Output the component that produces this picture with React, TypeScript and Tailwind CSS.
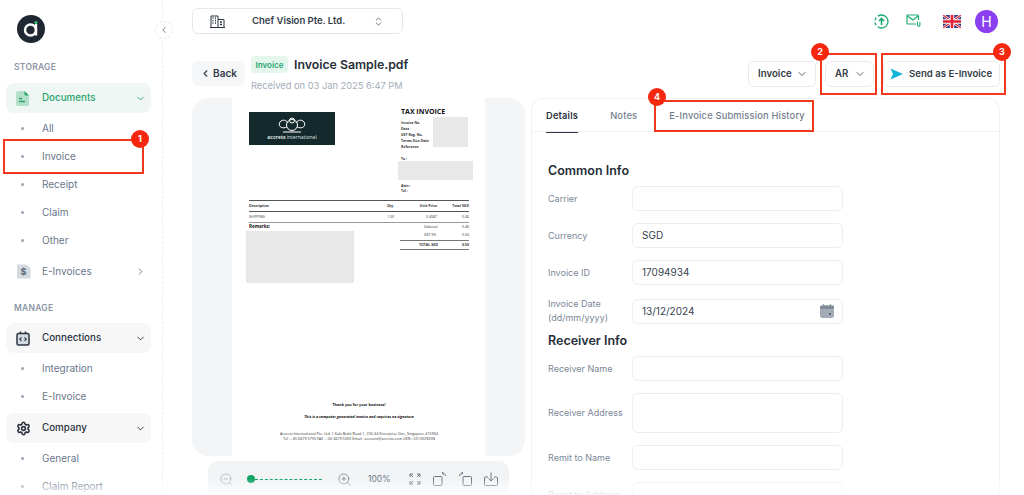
import { ChevronDown, ChevronLeft, ChevronRight, ChevronsUpDown, Settings, ZoomIn, ZoomOut } from "lucide-react";

function SubItem({ label }: { label: string }) {
  return (
    <div className="flex h-[28px] items-center pl-[21px] text-[10px] text-[#69778a]">
      <span className="mr-[18px] h-[3px] w-[3px] rounded-full bg-[#9aa5b3]" />
      {label}
    </div>
  );
}

function GroupRow({ icon, label, active, open = true }: { icon: React.ReactNode; label: string; active?: boolean; open?: boolean }) {
  return (
    <div className={`mx-[6px] flex h-[30px] w-[145px] items-center rounded-[8px] pl-[10px] pr-[5px] text-[9.8px] font-medium ${active ? "bg-[#eff6f3] text-[#2ba56f]" : "bg-[#f7f7f8] text-[#2b3440]"}`}>
      <span className="flex w-[26px] shrink-0 items-center">{icon}</span>
      <span className="flex-1">{label}</span>
      {open && <ChevronDown size={11} strokeWidth={2} />}
    </div>
  );
}

function Sidebar() {
  return (
    <aside className="w-[163px] shrink-0 border-r border-dashed border-[#eceef0]">
      <div className="pl-[17px] pt-[15px]">
        <svg width="28" height="28" viewBox="0 0 28 28">
          <circle cx="14" cy="14" r="14" fill="#1f2733" />
          <circle cx="13.5" cy="15" r="5.5" fill="none" stroke="#fff" strokeWidth="2.4" />
          <path d="M19 9v11.5" stroke="#fff" strokeWidth="2.4" />
          <circle cx="19" cy="7.5" r="1.6" fill="#34c17b" />
        </svg>
      </div>
      <div className="mt-[18px] h-[12px] pl-[14px] text-[8.5px] font-semibold leading-[12px] tracking-[0.03em] text-[#8b96a5]">STORAGE</div>
      <div className="mt-[10px]">
        <GroupRow
          active
          label="Documents"
          icon={
            <svg width="13" height="15" viewBox="0 0 13 15">
              <path d="M2 0h6.5L13 4.5V13a2 2 0 0 1-2 2H2a2 2 0 0 1-2-2V2a2 2 0 0 1 2-2z" fill="#b4e0ca" />
              <path d="M8.5 0L13 4.5H9.500a1 1 0 0 1-1-1z" fill="#2ba56f" />
              <path d="M3 7.5h3M3 10.5h6" stroke="#2ba56f" strokeWidth="1.3" />
            </svg>
          }
        />
      </div>
      <div className="mt-[1px]">
        {["All", "Invoice", "Receipt", "Claim", "Other"].map((s) => (
          <SubItem key={s} label={s} />
        ))}
      </div>
      <div className="mx-[6px] mt-[2px] flex h-[30px] w-[145px] items-center pl-[10px] pr-[5px] text-[10px] text-[#69778a]">
        <span className="flex w-[26px] shrink-0 items-center">
          <svg width="15" height="15" viewBox="0 0 15 15">
            <path d="M1 0.5h9.5L14.500 4v10.500H1z" fill="#d5dae0" />
            <text x="7.5" y="11" fontSize="9" fontWeight="700" textAnchor="middle" fill="#5b6878" fontFamily="Inter">$</text>
          </svg>
        </span>
        <span className="flex-1">E-Invoices</span>
        <ChevronRight size={11} strokeWidth={2} />
      </div>
      <div className="mt-[16px] h-[12px] pl-[14px] text-[8.5px] font-semibold leading-[12px] tracking-[0.03em] text-[#8b96a5]">MANAGE</div>
      <div className="mt-[9px]">
        <GroupRow
          label="Connections"
          icon={
            <svg width="14" height="15" viewBox="0 0 14 15" fill="none">
              <rect x="1" y="2.5" width="12" height="11.5" rx="1.5" fill="#d5dae0" stroke="#2b3440" strokeWidth="1.5" />
              <path d="M4.500 0.500v2M9.500 0.500v2" stroke="#2b3440" strokeWidth="1.5" />
              <path d="M5.500 6.500L3.800 8.200l1.700 1.700M8.500 6.500l1.700 1.700-1.700 1.700" stroke="#2b3440" strokeWidth="1.1" />
            </svg>
          }
        />
      </div>
      <div className="mt-[1px]">
        <SubItem label="Integration" />
        <SubItem label="E-Invoice" />
      </div>
      <div className="mt-[3px]">
        <GroupRow label="Company" icon={<Settings size={15} strokeWidth={2.6} className="text-[#2b3440]" />} />
      </div>
      <div className="mt-[1px]">
        <SubItem label="General" />
        <SubItem label="Claim Report" />
      </div>
    </aside>
  );
}

function TopBar() {
  return (
    <div className="flex h-[50px] items-start justify-between pr-[26px] pt-[8px]">
      <div className="flex h-[26px] w-[211px] items-center rounded-[6px] border border-[#e5e8eb] pl-[17px] pr-[18px] text-[9.5px] font-semibold text-[#333c48]">
        <svg width="15" height="13" viewBox="0 0 15 13" fill="none" stroke="#2b3440" strokeWidth="1">
          <path d="M1 12.500V1h7v11.500M8 4.500h6v8M0 12.500h15" />
          <path d="M2.500 3h1M5 3h1M2.500 5.500h1M5 5.500h1M2.500 8h1M5 8h1M10 7h2M10 9.500h2" strokeWidth="1.4" />
        </svg>
        <span className="ml-[27px] flex-1">Chef Vision Pte. Ltd.</span>
        <ChevronsUpDown size={11} strokeWidth={1.4} className="text-[#2b3440]" />
      </div>
      <div className="flex items-center pt-[1.5px]">
        <svg width="15" height="15" viewBox="0 0 15 15" fill="none" stroke="#1fa971" strokeWidth="1.3">
          <circle cx="7.500" cy="7.500" r="6.500" strokeDasharray="14 2 3 2 3 2" />
          <path d="M7.500 11V5M5 7l2.500-2.500L10 7" strokeWidth="1.6" />
        </svg>
        <svg width="15" height="14" viewBox="0 0 15 14" fill="none" stroke="#1fa971" strokeWidth="1.2" className="ml-[17px]">
          <path d="M10 10H2a1 1 0 0 1-1-1V2a1 1 0 0 1 1-1h9.500a1 1 0 0 1 1 1v4" />
          <path d="M1.500 2L7 6l5-4" />
          <path d="M11.500 7.500v3.500a1.200 1.200 0 0 0 2.400 0V8" strokeWidth="1.1" />
        </svg>
        <svg width="18" height="13" viewBox="0 0 18 13" className="ml-[22px]">
          <rect width="18" height="13" fill="#2b3a78" />
          <path d="M0 0l18 13M18 0L0 13" stroke="#fff" strokeWidth="2.600" />
          <path d="M0 0l18 13M18 0L0 13" stroke="#e5213a" strokeWidth="1.200" />
          <path d="M9 0v13M0 6.500h18" stroke="#fff" strokeWidth="4.500" />
          <path d="M9 0v13M0 6.500h18" stroke="#e5213a" strokeWidth="2.600" />
        </svg>
        <div className="ml-[14px] flex h-[23px] w-[23px] items-center justify-center rounded-full bg-[#8a3ff0] text-[14px] text-white">H</div>
      </div>
    </div>
  );
}

function DocHeader() {
  return (
    <div className="flex h-[48px] pr-[24px] pt-[6px]">
      <div className="mt-[5px] flex h-[25px] w-[53px] items-center justify-center gap-[2px] rounded-[6px] bg-[#f6f7f8] text-[10px] font-semibold text-[#333c48]">
        <ChevronLeft size={11} strokeWidth={2.4} />
        Back
      </div>
      <div className="ml-[6px]">
        <div className="flex h-[17px] items-center">
          <span className="flex h-[17px] w-[37px] items-center justify-center rounded-[4px] bg-[#e5f6ec] text-[8px] font-semibold text-[#2ba56f]">Invoice</span>
          <span className="ml-[6px] pt-[1px] text-[12.3px] font-semibold text-[#262e39]">Invoice Sample.pdf</span>
        </div>
        <div className="mt-[6px] text-[9.3px] leading-[14px] text-[#a3adb9]">Received on 03 Jan 2025 6:47 PM</div>
      </div>
      <div className="ml-auto mt-[5px] flex gap-[9px]">
        <div className="flex h-[26px] w-[68px] items-center justify-between rounded-[6px] border border-[#e8eaed] pl-[9px] pr-[7px] text-[9.7px] font-semibold text-[#333c48]">
          Invoice
          <ChevronDown size={12} strokeWidth={1.6} />
        </div>
        <div className="flex h-[26px] w-[49px] items-center justify-between rounded-[6px] border border-[#e8eaed] pl-[9px] pr-[7px] text-[9.7px] font-semibold text-[#333c48]">
          AR
          <ChevronDown size={12} strokeWidth={1.6} />
        </div>
        <div className="flex h-[26px] w-[117px] items-center whitespace-nowrap rounded-[6px] border border-[#e8eaed] pl-[6px] text-[9.6px] font-semibold text-[#333c48]">
          <svg width="13" height="12" viewBox="0 0 13 12">
            <path d="M0.500 0.500L13 6 0.500 11.500 3 6z" fill="#11b3d6" />
          </svg>
          <span className="ml-[6px]">Send as E-Invoice</span>
        </div>
      </div>
    </div>
  );
}

function InvoicePage() {
  const fieldLabels = ["Invoice No", "Date", "GST Reg. No.", "Terms Due Date", "Reference"];
  return (
    <div className="mx-auto flex h-[358px] w-[253px] flex-col bg-white pl-[17px] pr-[16px] font-['Open_Sans',sans-serif] text-[#333]">
      <div className="flex justify-between">
        <div className="mt-[14px] flex h-[33px] w-[86px] flex-col items-center justify-center bg-[#14292b] text-[5px] leading-[6px] text-[#dfe5e5]">
          <svg width="32" height="17" viewBox="0 0 32 17" fill="none" stroke="#fff" strokeWidth="1">
            <circle cx="16" cy="8" r="5.500" />
            <circle cx="16" cy="3.500" r="2.500" />
            <path d="M11 10C4 13 1 7 5 4c3-2 6 0 7 2M21 10c7 3 10-3 6-6-3-2-6 0-7 2M7 15h18" />
          </svg>
          <span><b>accrets</b> international</span>
        </div>
        <div className="mr-[-4px] w-[75px]">
          <div className="mt-[9px] pl-[3px] text-[7px] font-bold leading-[10px] text-[#111]">TAX INVOICE</div>
          <div className="flex">
            <div className="mt-[3px] w-[35px] pl-[3px] text-[3.500px] font-bold leading-[6px]">
              {fieldLabels.map((f) => (
                <div key={f} className="whitespace-nowrap">{f}</div>
              ))}
            </div>
            <div className="h-[30px] w-[35px] bg-[#e8e8e8]" />
          </div>
          <div className="mt-[7px] pl-[3px] text-[3.500px] font-bold leading-[4px]">To :</div>
          <div className="h-[19px] w-[75px] bg-[#e8e8e8]" />
          <div className="mt-[3px] pl-[3px] text-[3.500px] font-bold leading-[5px]">
            <div>Attn :</div>
            <div>Tel :</div>
          </div>
        </div>
      </div>
      <div className="mt-[7px] flex h-[12px] items-center justify-end border-y border-y-[#555] text-[3.500px] font-bold">
        <span className="mr-auto">Description</span>
        <span className="w-[20px]">Qty</span>
        <span className="w-[30px] text-right">Unit Price</span>
        <span className="w-[32px] text-right">Total SGD</span>
      </div>
      <div className="flex h-[11px] items-center justify-end border-b border-b-[#999] text-[3.500px]">
        <span className="mr-auto">SHIPPING</span>
        <span className="w-[20px]">1.00</span>
        <span className="w-[30px] text-right">0.4587</span>
        <span className="w-[32px] text-right">0.46</span>
      </div>
      <div className="flex">
        <div className="w-[151px]">
          <div className="text-[4.500px] font-bold leading-[7px] text-[#111]">Remarks:</div>
          <div className="ml-[-3px] mt-[1px] h-[52px] w-[108px] bg-[#e8e8e8]" />
        </div>
        <div className="w-[69px] text-right text-[3.500px] leading-[8px]">
          <div className="flex justify-between pl-[24px]"><span>Subtotal</span><span>0.46</span></div>
          <div className="flex justify-between pl-[24px]"><span>GST 9%</span><span>0.04</span></div>
          <div className="mt-[1px] flex justify-between border-y border-y-[#777] pl-[19px] font-bold"><span>TOTAL SGD</span><span>0.50</span></div>
        </div>
      </div>
      <div className="mt-auto pb-[15px] text-center text-[3.700px] leading-[5px]">
        <div className="font-bold text-[#111]">Thank you for your business!</div>
        <div className="mt-[7px] font-bold italic text-[#111]">This is a computer generated invoice and requires no signature</div>
        <div className="mt-[12px]">Accrets International Pte. Ltd. 1 Kaki Bukit Road 1, #02-44 Enterprise One, Singapore 415934</div>
        <div>Tel : +65 6679 5755 FAX : +65 6679 5003 Email : account@accrets.com UEN : 201332925N</div>
      </div>
    </div>
  );
}

function ZoomBar() {
  return (
    <div className="ml-[16px] mt-[5px] flex h-[36px] w-[301px] items-center rounded-[10px] bg-[#f1f3f5] pl-[11px] text-[#6a7685]">
      <ZoomOut size={15} strokeWidth={1.1} className="text-[#a3adb9]" />
      <div className="ml-[13px] flex w-[75px] items-center">
        <span className="h-[8px] w-[8px] shrink-0 rounded-full bg-[#12a566]" />
        <span className="flex-1 border-t border-dashed border-t-[#12a566]" />
      </div>
      <ZoomIn size={15} strokeWidth={1.1} className="ml-[15px]" />
      <span className="ml-[16px] text-[8.5px]">100%</span>
      <svg width="12" height="12" viewBox="0 0 12 12" fill="none" stroke="#6a7685" strokeWidth="1" className="ml-[18px]">
        <path d="M1 4V1h3M1 1l3 3M8 1h3v3M11 1L8 4M1 8v3h3M1 11l3-3M11 8v3H8M11 11L8 8" />
      </svg>
      <svg width="13" height="14" viewBox="0 0 13 14" fill="none" stroke="#6a7685" strokeWidth="1" className="ml-[12px]">
        <rect x="0.500" y="4.500" width="8.500" height="9" rx="1" />
        <path d="M9 1c2 0 3.500 1 3.500 3M9 1l1.500-1M9 1l1.500 1.500" />
      </svg>
      <svg width="13" height="14" viewBox="0 0 13 14" fill="none" stroke="#6a7685" strokeWidth="1" className="ml-[13px]">
        <rect x="4" y="4.500" width="8.500" height="9" rx="1" />
        <path d="M4 1C2 1 .5 2 .5 4M4 1L2.500 0M4 1L2.500 2.500" />
      </svg>
      <svg width="14" height="14" viewBox="0 0 14 14" fill="none" stroke="#6a7685" strokeWidth="1" className="ml-[12px]">
        <path d="M4 5H1.500a1 1 0 0 0-1 1v6.500a1 1 0 0 0 1 1h11a1 1 0 0 0 1-1V6a1 1 0 0 0-1-1H10" />
        <path d="M7 .5V9M4.500 6.500L7 9l2.500-2.500" />
      </svg>
    </div>
  );
}

function Field({ label, value, tall, icon }: { label: React.ReactNode; value?: string; tall?: boolean; icon?: React.ReactNode }) {
  return (
    <div className="flex items-center">
      <div className="w-[84px] shrink-0 text-[9px] leading-[14px] text-[#7b8796]">{label}</div>
      <div className={`flex w-[211px] items-center justify-between rounded-[6px] border border-[#eceef0] pl-[9px] pr-[8px] text-[10px] text-[#39424e] ${tall ? "h-[40px]" : "h-[25px]"}`}>
        <span>{value}</span>
        {icon}
      </div>
    </div>
  );
}

function DetailsCard() {
  return (
    <div className="h-[420px] w-[469px] rounded-t-[12px] border border-[#f0f1f3] bg-white">
      <div className="flex h-[33px] items-center border-b border-b-[#f0f1f3] pl-[14px] pt-[2px] text-[9.3px] font-medium tracking-[0.02em] text-[#717d8c]">
        <span className="relative flex h-[31px] items-center font-semibold text-[#2b3440]">
          Details
          <span className="absolute bottom-[-1px] left-0 right-0 h-[1px] bg-[#2b3440]" />
        </span>
        <span className="ml-[32px]">Notes</span>
        <span className="ml-[32px]">E-Invoice Submission History</span>
      </div>
      <div className="pl-[16px]">
        <h2 className="mt-[31px] text-[12.5px] font-semibold leading-[16px] text-[#262e39]">Common Info</h2>
        <div className="mt-[7px] flex flex-col gap-[12px]">
          <Field label="Carrier" />
          <Field label="Currency" value="SGD" />
          <Field label="Invoice ID" value="17094934" />
          <Field
            label={<>Invoice Date<br />(dd/mm/yyyy)</>}
            value="13/12/2024"
            icon={
              <svg width="14" height="14" viewBox="0 0 14 14">
                <path d="M3.500 0v2M10.500 0v2" stroke="#97a1ac" strokeWidth="1.200" />
                <rect y="1.500" width="14" height="12.500" rx="2.500" fill="#a3acb6" />
                <rect y="1.500" width="14" height="3.500" rx="1.500" fill="#7f8a96" />
                <rect x="9" y="9" width="2" height="2" fill="#5d6976" />
              </svg>
            }
          />
        </div>
        <h2 className="mt-[8px] text-[12.5px] font-semibold leading-[16px] text-[#262e39]">Receiver Info</h2>
        <div className="mt-[7px] flex flex-col gap-[12px]">
          <Field label="Receiver Name" />
          <Field label="Receiver Address" tall />
          <Field label="Remit to Name" />
          <Field label="Remit to Address" />
        </div>
      </div>
    </div>
  );
}

function Badge({ n, className }: { n: number; className: string }) {
  return (
    <span className={`absolute flex h-[18px] w-[18px] items-center justify-center rounded-full bg-[#f5280f] text-[9px] font-bold text-white ${className}`}>{n}</span>
  );
}

export default function App() {
  return (
    <div className="relative flex h-[495px] w-[1024px] overflow-hidden bg-white font-['Inter',sans-serif]">
      <Sidebar />
      <main className="min-w-0 flex-1 pl-[29px]">
        <TopBar />
        <DocHeader />
        <div className="flex gap-[6px]">
          <div className="w-[333px] shrink-0">
            <div className="overflow-hidden rounded-[16px] bg-[#f3f5f7]">
              <InvoicePage />
            </div>
            <ZoomBar />
          </div>
          <DetailsCard />
        </div>
      </main>

      {/* collapse toggle */}
      <span className="absolute left-[155px] top-[21px] flex h-[18px] w-[18px] items-center justify-center rounded-full border border-dashed border-[#e3e6e9] bg-white text-[#5b6878]">
        <ChevronLeft size={10} />
      </span>

      {/* annotation overlays */}
      <div className="absolute left-[3px] top-[139px] h-[35px] w-[141px] border-2 border-[#f0381f]" />
      <div className="absolute left-[820px] top-[53px] h-[42px] w-[57px] border-2 border-[#f0381f]" />
      <div className="absolute left-[881px] top-[53px] h-[42px] w-[125px] border-2 border-[#f0381f]" />
      <div className="absolute left-[654px] top-[100px] h-[32px] w-[160px] border-2 border-[#f0381f]" />
      <Badge n={1} className="left-[131px] top-[130px]" />
      <Badge n={2} className="left-[811px] top-[43px]" />
      <Badge n={3} className="left-[993px] top-[43px]" />
      <Badge n={4} className="left-[648px] top-[88px]" />

      {/* bottom fade */}
      <div className="pointer-events-none absolute inset-x-0 bottom-0 h-[16px] bg-gradient-to-b from-transparent to-white/90" />
    </div>
  );
}
